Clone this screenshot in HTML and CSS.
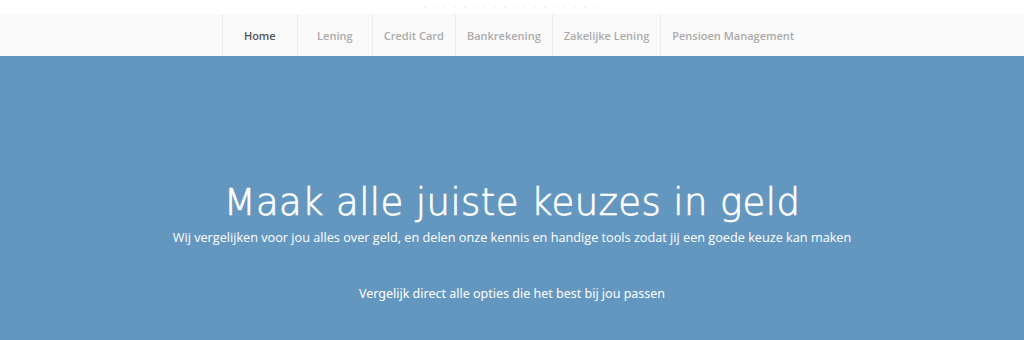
FILE: index.html
```html
<!DOCTYPE html>
<html lang="nl">
<head>
  <meta charset="UTF-8">
  <title>Maak alle juiste keuzes in geld</title>
  <link rel="stylesheet" href="styles.css">
</head>
<body>

<div class="topbar">
  <div class="dots"></div>
</div>

<nav class="menu">
  <ul>
    <li class="active"><a href="#">Home</a></li>
    <li><a href="#">Lening</a></li>
    <li><a href="#">Credit Card</a></li>
    <li><a href="#">Bankrekening</a></li>
    <li><a href="#">Zakelijke Lening</a></li>
    <li><a href="#">Pensioen Management</a></li>
  </ul>
</nav>

<section class="hero">
  <h1>Maak alle juiste keuzes in geld</h1>
  <p class="lead">Wij vergelijken voor jou alles over geld, en delen onze kennis en handige tools zodat jij een goede keuze kan maken</p>
  <p class="cta">Vergelijk direct alle opties die het best bij jou passen</p>
</section>

</body>
</html>
```

FILE: styles.css
```css
* {
  box-sizing: border-box;
}

body {
  margin: 0;
  font-family: 'Open Sans', sans-serif;
  background: #fff;
}

.topbar {
  height: 14px;
  display: flex;
  justify-content: center;
  align-items: center;
}

.dots {
  width: 180px;
  height: 1px;
  margin-left: 4px;
  background: repeating-linear-gradient(to right, #e2e2e2 0 1px, transparent 1px 10px);
}

.menu {
  background: #fafafa;
  height: 42px;
}

.menu ul {
  list-style: none;
  margin: 0;
  padding: 0 8px 0 0;
  display: flex;
  justify-content: center;
  height: 100%;
}

.menu li {
  border-left: 1px solid #ececec;
  min-width: 75px;
  display: flex;
  align-items: center;
  justify-content: center;
  padding: 0 11px;
}

.menu li:last-child {
  padding-right: 0;
}

.menu a {
  font-size: 11px;
  font-weight: 600;
  color: #aaa;
  text-decoration: none;
}

.menu li.active a {
  color: #555;
}

.hero {
  background: #6497bf;
  height: 284px;
  text-align: center;
  color: #fff;
  padding-top: 127px;
}

.hero h1 {
  margin: 0;
  font-family: 'DejaVu Sans', sans-serif;
  font-weight: 200;
  font-size: 37px;
  line-height: 40px;
  letter-spacing: 0.4px;
  -webkit-text-stroke: 0.7px #fff;
}

.lead {
  margin: 7px 0 0;
  font-size: 12.7px;
  line-height: 15px;
}

.cta {
  margin: 40px 0 0;
  font-size: 12.5px;
  font-family: 'Noto Sans', sans-serif;
}
```
